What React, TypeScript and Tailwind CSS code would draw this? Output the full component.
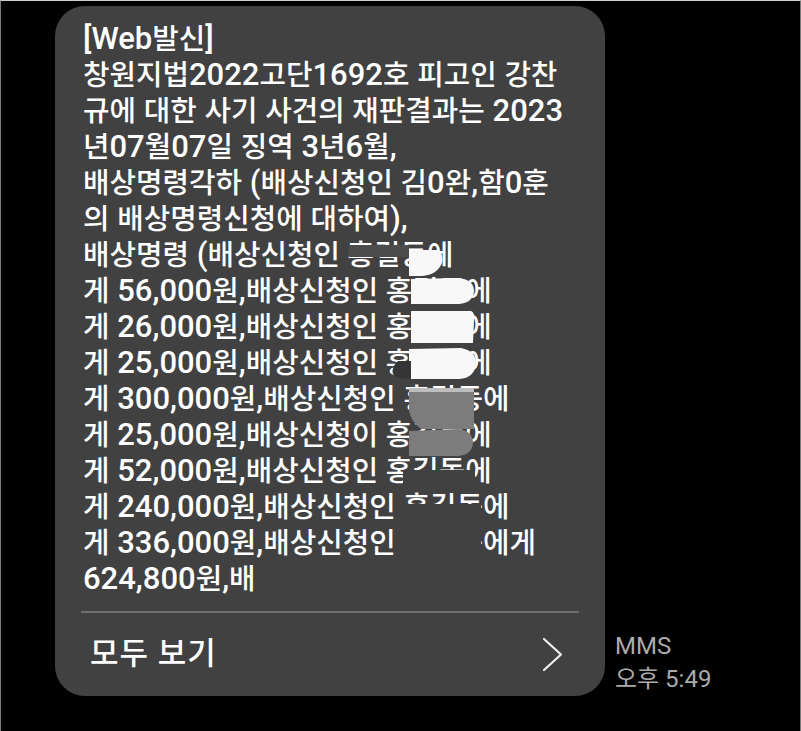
import React from "react";

type Line = { pre: string; name?: string; post?: string };

const lines: Line[] = [
  { pre: "[Web발신]" },
  { pre: "창원지법2022고단1692호 피고인 강찬" },
  { pre: "규에 대한 사기 사건의 재판결과는 2023" },
  { pre: "년07월07일 징역 3년6월," },
  { pre: "배상명령각하 (배상신청인 김0완,함0훈" },
  { pre: "의 배상명령신청에 대하여)," },
  { pre: "배상명령 (배상신청인 ", name: "홍길동", post: "에" },
  { pre: "게 56,000원,배상신청인 ", name: "홍길동", post: "에" },
  { pre: "게 26,000원,배상신청인 ", name: "홍길동", post: "에" },
  { pre: "게 25,000원,배상신청인 ", name: "홍길동", post: "에" },
  { pre: "게 300,000원,배상신청인 ", name: "홍길동", post: "에" },
  { pre: "게 25,000원,배상신청이 ", name: "홍길동", post: "에" },
  { pre: "게 52,000원,배상신청인 ", name: "홍길동", post: "에" },
  { pre: "게 240,000원,배상신청인 ", name: "홍길동", post: "에" },
  { pre: "게 336,000원,배상신청인 ", name: "홍길동", post: "에게" },
  { pre: "624,800원,배" },
];

const HANGUL = /[\u3131-\u318E\uAC00-\uD7A3]/;

function Runs({ text }: { text: string }) {
  const parts = text.split(/([\u3131-\u318E\uAC00-\uD7A3]+)/).filter((p) => p.length > 0);
  return (
    <>
      {parts.map((p, i) =>
        HANGUL.test(p) ? (
          <span key={i} className="text-[28.8px]">{p}</span>
        ) : (
          <span key={i} className="text-[31px]">{p}</span>
        )
      )}
    </>
  );
}

export default function App() {
  return (
    <div className="relative w-[801px] h-[731px] bg-black box-border border-t border-l border-r border-t-[#cfcfcf] border-l-[#7a7a7a] border-r-[#7a7a7a] flex items-end gap-[10px] pl-[54px] pt-[5px] pb-[35px] font-['Roboto','Noto_Sans_CJK_KR',sans-serif]">
      <div className="w-[550px] self-start rounded-[30px] bg-[#414141] flex flex-col">
        <div className="pt-[15px] pl-[28px] leading-[36px] text-white font-medium">
          {lines.map((l, i) => (
            <div key={i} className="whitespace-nowrap h-[36px]">
              <Runs text={l.pre} />
              {l.name && <span className="text-[28.8px]">{l.name}</span>}
              {l.post && <Runs text={l.post} />}
            </div>
          ))}
        </div>
        <div className="mt-[14px] mx-[26px] h-[2px] bg-[#6e6e6e]" />
        <div className="h-[83px] flex items-center justify-between pl-[35px] pr-[42px]">
          <span className="text-[31px] tracking-[1px] text-white font-medium">모두 보기</span>
          <svg width="21" height="35" viewBox="0 0 21 35" fill="none">
            <polyline points="2,2 19,17.5 2,33" stroke="#f0f0f0" strokeWidth="2.2" strokeLinecap="round" strokeLinejoin="round" />
          </svg>
        </div>
      </div>
      <div className="flex flex-col text-[24px] leading-[33px] text-[#ababab]">
        <span>MMS</span>
        <span>오후 5:49</span>
      </div>
      <svg className="absolute left-0 top-0 pointer-events-none" width="801" height="731" viewBox="0 0 801 731">
        <rect x="348" y="244" width="60" height="12" fill="#4c4c4c" />
        <path d="M408,249 L436,249 Q443,252 441,262 Q436,274 421,275 L408,275 Z" fill="#f8f8f8" />
        <path d="M410,278 L458,277 Q473,279 473,290 Q472,302 458,303 L410,303 Z" fill="#f8f8f8" />
        <path d="M410,310 L470,310 Q474,311 473,320 L472,342 L410,342 Z" fill="#f8f8f8" />
        <path d="M408,348 L460,347 Q475,350 475,362 Q474,377 458,378 L408,378 Z" fill="#f8f8f8" />
        <path d="M410,360 L397,360 Q390,366 392,373 Q396,378 410,378 Z" fill="#353535" />
        <rect x="408" y="387" width="65" height="5" fill="#bdbdbd" />
        <path d="M408,391 L473,391 L473,428 L420,428 Q410,420 408,410 Z" fill="#7c7c7c" />
        <path d="M408,430 L458,428 Q472,430 472,442 Q471,454 457,455 L408,455 Z" fill="#7c7c7c" />
        <rect x="402" y="469" width="72" height="20" fill="#414141" />
        <rect x="402" y="503" width="78" height="22" fill="#414141" />
        <rect x="400" y="526" width="80" height="33" fill="#414141" />
      </svg>
    </div>
  );
}
